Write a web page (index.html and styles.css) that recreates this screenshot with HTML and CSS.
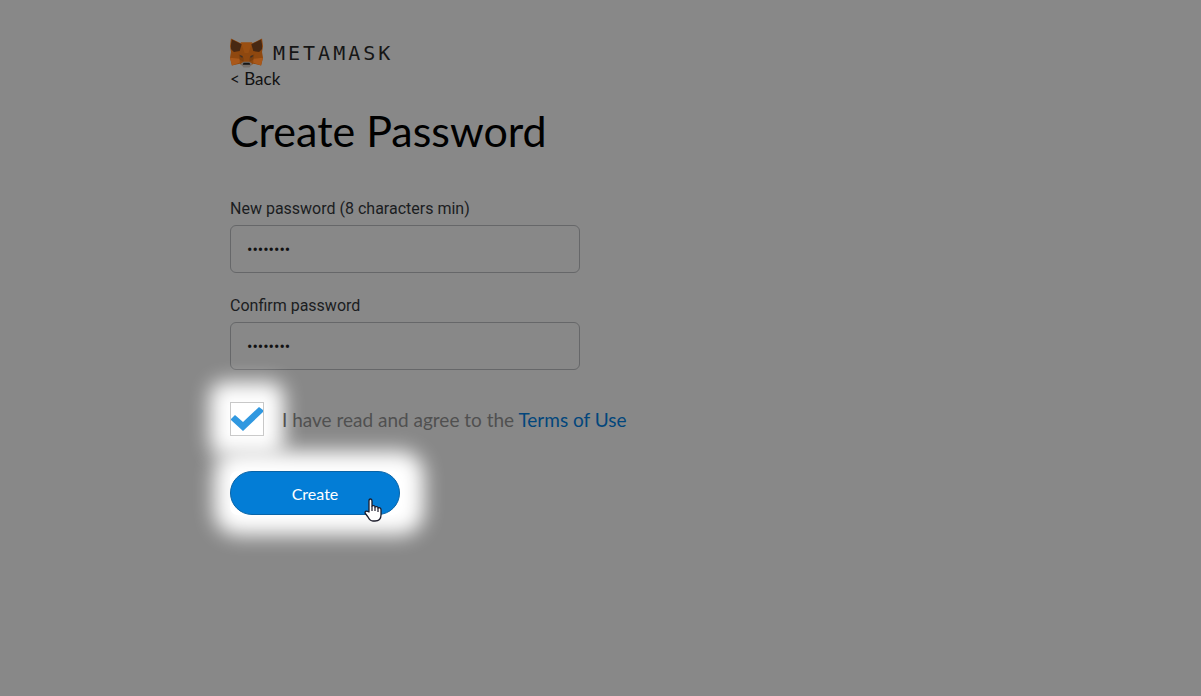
FILE: index.html
```
<!DOCTYPE html>
<html lang="en">

<head>
    <meta charset="UTF-8" />
    <meta name="viewport" content="width=device-width, initial-scale=1.0" />
    <title>MetaMask</title>
    <link rel="stylesheet" href="styles.css">
</head>

<body>
    <main class="first-time-flow">
        <header class="logo">
            <svg class="logo-fox" viewBox="0 0 34 30" aria-hidden="true">
                <path fill="#8f480f" d="M1 0l10 5h12L33 0l1 8-1 6 1 6-2 8-8-2-4 3h-6l-4-3-8 2-2-8 1-6-1-6z" />
                <path fill="#9a4f12" d="M11 4h12l-4 11h-4z" />
                <path fill="#482812" d="M2 1l10 5-2 7-6 1-3-3V6zM32 1L22 6l2 7 6 1 3-3V6z" />
                <path fill="#a9581a" d="M0 20l10 1v4l-8 3zM34 20l-10 1v4l8 3z" />
                <path fill="#7c400f" d="M9 16l5 4v4l-4-2zM25 16l-5 4v4l4-2z" />
                <path fill="#3a3029" d="M10 17l3 1v2l-2-1zM24 17l-3 1v2l2-1z" />
                <path fill="#77706b" d="M11 26l3-2h6l3 2-3 4h-6z" />
                <path fill="#151515" d="M14 25h6l1 2h-8z" />
            </svg>
            <span class="logo-text">METAMASK</span>
        </header>

        <a class="back" href="#">&lt; Back</a>
        <h1>Create Password</h1>

        <form>
            <div class="field">
                <label for="create-password">New password (8 characters min)</label>
                <input id="create-password" type="password" value="password">
            </div>
            <div class="field">
                <label for="confirm-password">Confirm password</label>
                <input id="confirm-password" type="password" value="password">
            </div>

            <div class="terms">
                <span class="checkbox">
                    <input id="terms" type="checkbox" checked>
                    <svg viewBox="0 0 34 34" aria-hidden="true">
                        <path fill="#3098e0" d="M1 17l4-4 8 7L29 5l4 3v2L13 29 1 18z" />
                    </svg>
                </span>
                <label for="terms">I have read and agree to the <a href="#">Terms of Use</a></label>
            </div>

            <div class="submit">
                <button type="button">Create</button>
                <svg class="pointer" viewBox="0 0 18 24" aria-hidden="true">
                    <path fill="#fff" stroke="#1c1c2b" stroke-width="1.3" stroke-linejoin="round"
                        d="M5 14V3q0-2 1.500-2T8 3v5q3-1 3 1 3-1 3 1 3-1 3 2v5q0 6-6 6H9q-3 0-5-4l-3-4q0-3 4-1z" />
                    <path fill="none" stroke="#1c1c2b" stroke-width="1.2" d="M8 8v5M11 9v4M14 10v4" />
                </svg>
            </div>
        </form>
    </main>
</body>

</html>
```
FILE: styles.css
```
* {
    box-sizing: border-box;
}

body {
    margin: 0;
    min-height: 100vh;
    background-color: #888;
    color: #000;
    font-family: Lato, sans-serif;
}

.first-time-flow {
    padding: 37px 24px 36px 230px;
}

.logo {
    display: flex;
    align-items: center;
    gap: 10px;
    height: 32px;
}

.logo-fox {
    width: 33px;
    height: 30px;
}

.logo-text {
    color: #161616;
    font-family: "DejaVu Sans Mono", monospace;
    font-size: 20px;
    letter-spacing: 3px;
}

.back {
    display: block;
    width: max-content;
    color: #111;
    font-size: 17px;
    line-height: 20px;
    text-decoration: none;
}

h1 {
    margin: 16px 0 41px;
    font-size: 43px;
    font-weight: 400;
    line-height: 52px;
}

.field {
    display: flex;
    flex-direction: column;
    gap: 6px;
    max-width: 350px;
    margin-bottom: 22px;
    font-family: Roboto, sans-serif;
}

.field label {
    color: #1b1d1f;
    font-size: 16px;
    line-height: 21px;
}

.field input {
    width: 100%;
    height: 48px;
    padding: 0 16px;
    border: 1px solid #666769;
    border-radius: 6px;
    background: transparent;
    color: #111;
    font-family: Roboto, sans-serif;
    font-size: 16px;
}

.terms {
    display: flex;
    align-items: center;
    gap: 18px;
    margin-top: 32px;
    color: #505050;
    font-size: 19px;
}

.terms a {
    color: #02467c;
    text-decoration: none;
}

.checkbox {
    display: grid;
    width: 34px;
    height: 34px;
    border-radius: 4px;
    background-color: #fff;
    box-shadow: 0 0 20px 20px #fff;
}

.checkbox input,
.checkbox svg {
    grid-area: 1 / 1;
    width: 34px;
    height: 34px;
    margin: 0;
}

.checkbox input {
    appearance: none;
    border: 1px solid #c8c8c8;
}

.checkbox svg {
    pointer-events: none;
}

.submit {
    position: relative;
    width: 170px;
    margin-top: 35px;
    border-radius: 8px;
    background-color: #fff;
    box-shadow: 4px 0 20px 20px #fff;
}

button {
    display: block;
    width: 100%;
    height: 44px;
    border: 1px solid #0864a8;
    border-radius: 22px;
    background-color: #037dd6;
    color: #fff;
    font-family: Lato, sans-serif;
    font-size: 16px;
    cursor: pointer;
}

/* hand resting on the corner of the button */
.pointer {
    position: absolute;
    top: 27px;
    left: 134px;
    width: 18px;
    height: 24px;
}
```
